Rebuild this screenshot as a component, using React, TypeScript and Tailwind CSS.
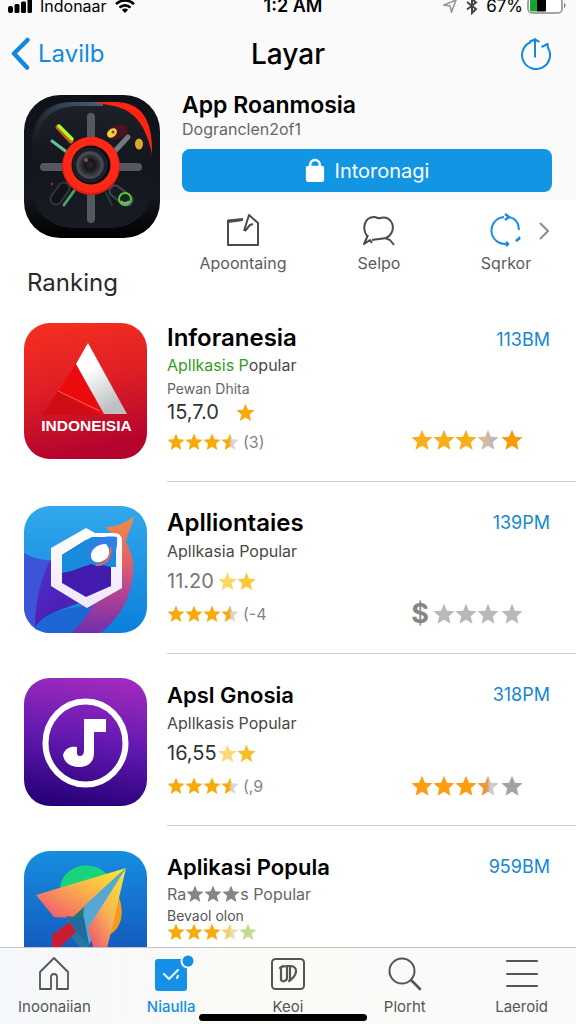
import type { ReactNode } from "react";

const STAR = "M12 0l3.300 8 8.700.6-6.600 5.700 2 8.600L12 18.300 4.600 22.900l2-8.600L0 8.600 8.700 8z";

function Star({ left, right, size }: { left: string; right?: string; size: "sm" | "md" | "lg" }) {
  const cls = size === "sm" ? "h-[18px] w-[18px]" : size === "md" ? "h-[19px] w-[19px]" : "h-[22px] w-[22px]";
  const id = `s${left}${right ?? ""}`.replace(/#/g, "");
  return (
    <svg viewBox="-0.500 -0.500 25 24.500" className={`${cls} shrink-0`} aria-hidden="true">
      {right && (
        <linearGradient id={id}>
          <stop offset="0.45" stopColor={left} />
          <stop offset="0.6" stopColor={right} />
        </linearGradient>
      )}
      <path d={STAR} fill={right ? `url(#${id})` : left} />
    </svg>
  );
}

function StatusBar() {
  return (
    <div className="relative flex h-4 items-start justify-between pl-2 pr-[10px] text-black">
      <div className="flex h-3 items-center gap-2">
        <svg viewBox="0 0 24 14" className="h-[14px] w-6" aria-hidden="true">
          <rect x="0" y="7" width="5" height="7" rx="2" />
          <rect x="6.5" y="5" width="5" height="9" rx="1.5" />
          <rect x="13" y="2.5" width="5" height="11.5" rx="1.5" />
          <rect x="19.5" y="0" width="4.5" height="14" rx="1.5" />
        </svg>
        <span className="text-[16px] leading-3">Indonaar</span>
        <svg viewBox="0 0 20 14" className="h-[14px] w-5" fill="none" stroke="black" strokeWidth="2.6" aria-hidden="true">
          <path d="M1 5.2C6 .2 14 .2 19 5.2M4.5 8.6c3-3 8-3 11 0" />
          <path d="M10 14l-3.2-3.2c1.8-1.7 4.6-1.7 6.4 0z" fill="black" stroke="none" />
        </svg>
      </div>
      <span className="absolute inset-x-0 top-0 pl-2.5 text-center text-[18px] font-semibold leading-3">1:2 AM</span>
      <div className="flex h-3 items-center">
        <svg viewBox="0 0 14 14" className="mr-[9px] h-[14px] w-[14px]" fill="none" stroke="#999" strokeWidth="1.6" aria-hidden="true">
          <path d="M1 6L13 1 8.500 13 7 7z" />
        </svg>
        <svg viewBox="0 0 12 18" className="mr-2 h-[18px] w-3" fill="none" stroke="#444" strokeWidth="2" aria-hidden="true">
          <path d="M1 5l9 7-4 4V2l4 3.500-9 7" />
        </svg>
        <span className="mr-1 text-[17px] leading-3">67%</span>
        <svg viewBox="0 0 39 18" className="h-[18px] w-[39px]" aria-hidden="true">
          <rect x="1" y="1" width="34" height="15" rx="4" fill="white" stroke="#888" strokeWidth="1.500" />
          <rect x="3" y="2.500" width="8" height="12" rx="1" fill="#16a52c" />
          <rect x="10" y="2.500" width="9" height="12" rx="1" fill="black" />
          <path d="M37 6c2 1 2 4 0 5z" fill="#777" />
        </svg>
      </div>
    </div>
  );
}

function Header() {
  return (
    <header className="relative flex h-[76px] items-center justify-between pl-[11px] pr-[25px]">
      <a href="#back" className="flex items-center gap-2 text-[#1489dc]">
        <svg viewBox="0 0 19 34" className="h-[34px] w-[19px]" fill="none" stroke="currentColor" strokeWidth="4.500" strokeLinecap="round" strokeLinejoin="round" aria-hidden="true">
          <path d="M16.500 3L3 16.500l13 14" />
        </svg>
        <span className="text-[24px] leading-8">Lavilb</span>
      </a>
      <h1 className="pointer-events-none absolute inset-x-0 text-center text-[28px] font-medium leading-9 text-black">Layar</h1>
      <button type="button" aria-label="Bagikan" className="text-[#1489dc]">
        <svg viewBox="0 0 32 34" className="h-[34px] w-8" fill="none" stroke="currentColor" strokeWidth="2" aria-hidden="true">
          <path d="M12 5A14 14 0 1 0 28.500 10M22.500 10l6-3 .5 4" />
          <path d="M16 20.500V2.500M10.500 4.500L16 2.500l4.500 2.500" />
          <path d="M11 4.500L16 1l4.500 3.500z" fill="currentColor" stroke="none" />
        </svg>
      </button>
    </header>
  );
}

function CameraIcon() {
  return (
    <svg viewBox="0 0 136 143" className="h-[143px] w-[136px] shrink-0" aria-hidden="true">
      <defs>
        <linearGradient id="camBg" x2="0" y2="1">
          <stop stopColor="#0e1116" />
          <stop offset="0.7" stopColor="#15181f" />
          <stop offset="1" stopColor="#000" />
        </linearGradient>
        <linearGradient id="camFace" x2="0" y2="1">
          <stop stopColor="#1d2128" />
          <stop offset="0.5" stopColor="#13161c" />
          <stop offset="1" stopColor="#181b23" />
        </linearGradient>
        <linearGradient id="camEdge" x1="1" x2="0" y2="1">
          <stop stopColor="#52647e" />
          <stop offset="1" stopColor="#20262f" stopOpacity="0" />
        </linearGradient>
        <radialGradient id="lens">
          <stop stopColor="#38252b" />
          <stop offset="0.3" stopColor="#17151b" />
          <stop offset="0.55" stopColor="#33353d" />
          <stop offset="0.72" stopColor="#4b4e58" />
          <stop offset="0.85" stopColor="#181a20" />
          <stop offset="1" stopColor="#24262d" />
        </radialGradient>
      </defs>
      <rect width="136" height="143" rx="36" fill="url(#camBg)" />
      <rect x="8" y="7" width="120" height="126" rx="40" fill="url(#camFace)" />
      <path d="M8 55V47C9 22 23 7 48 7h31v4H52C28 12 18 24 14 40z" fill="url(#camEdge)" />
      <path d="M70 7h21c26 0 38 17 37 52-6-29-18-46-44-49z" fill="#ff2412" />
      <g stroke="#55585e" strokeWidth="8" strokeLinecap="round">
        <path d="M67 22v30M67 92v32M20 72h30M90 72h24" />
      </g>
      <g strokeLinecap="round" fill="none">
        <path d="M34 32l13 14" stroke="#cf591f" strokeWidth="5" />
        <path d="M35 31l13 13" stroke="#a6ff21" strokeWidth="3.500" />
        <path d="M28 46l16 12" stroke="#65bfa6" strokeWidth="3" />
        <path d="M104 42L91 56" stroke="#747981" strokeWidth="5" />
        <path d="M40 93l-8 11" stroke="#30363d" strokeWidth="13" />
        <path d="M40 93l-8 11" stroke="#101319" strokeWidth="9" />
        <path d="M50 96l-10 14" stroke="#4b9e67" strokeWidth="3" />
        <path d="M91 96l12 9" stroke="#40484d" strokeWidth="13" />
        <path d="M91 96l11 9" stroke="#171c20" strokeWidth="9" />
        <path d="M82 98l6 12" stroke="#244039" strokeWidth="2" />
      </g>
      <ellipse cx="93" cy="37" rx="11" ry="7" transform="rotate(-20 93 37)" fill="#481421" />
      <ellipse cx="88" cy="38" rx="5.500" ry="4" transform="rotate(-40 88 38)" fill="#f1d43d" />
      <circle cx="89" cy="37" r="1.500" fill="#8a431a" />
      <ellipse cx="115" cy="49" rx="4" ry="5.500" fill="#d9a92b" />
      <circle cx="101" cy="104" r="6" fill="#15281d" stroke="#58c63b" strokeWidth="2" />
      <path d="M97 106a5 5 0 0 0 8 0" stroke="#94adb0" strokeWidth="2" fill="none" />
      <circle cx="28" cy="89" r="1.500" fill="#7b3420" />
      <circle cx="67" cy="71" r="29" fill="#d71c11" />
      <circle cx="67" cy="70" r="28" fill="#fd2816" />
      <circle cx="67" cy="70" r="19.500" fill="#090a0e" />
      <circle cx="66" cy="70" r="17.500" fill="url(#lens)" />
      <circle cx="62" cy="65" r="2" fill="#6b5960" />
    </svg>
  );
}

function RedIcon() {
  return (
    <svg viewBox="0 0 123 136" className="h-[136px] w-[123px]" role="img" aria-label="INDONEISIA">
      <defs>
        <linearGradient id="redBg" x2="0.200" y2="1">
          <stop stopColor="#f6301f" />
          <stop offset="0.5" stopColor="#df1f25" />
          <stop offset="1" stopColor="#b5042d" />
        </linearGradient>
        <linearGradient id="silver" x2="0.500" y2="1">
          <stop offset="0.400" stopColor="#fff" />
          <stop offset="1" stopColor="#bfc0c3" />
        </linearGradient>
      </defs>
      <rect width="123" height="136" rx="26" fill="url(#redBg)" />
      <path d="M52 41L18 92h62z" fill="#ed0a0d" />
      <path d="M34 68l-16 24h58z" fill="#cf0d14" />
      <path d="M34 68l42 20" stroke="#fb6a53" strokeWidth="1" />
      <path d="M64 20L52 41l28 50h23z" fill="url(#silver)" />
      <text x="62.500" y="108" textAnchor="middle" fill="#fff" fontSize="15.500" fontWeight="700" fontFamily="Liberation Sans, sans-serif">INDONEISIA</text>
    </svg>
  );
}

function HexIcon() {
  return (
    <svg viewBox="0 0 123 127" className="h-[127px] w-[123px]" aria-hidden="true">
      <defs>
        <linearGradient id="hexBg" x2="0" y2="1">
          <stop stopColor="#32a8ed" />
          <stop offset="1" stopColor="#0b80dc" />
        </linearGradient>
        <linearGradient id="hexPurple" x2="1" y2="1">
          <stop stopColor="#5039d4" />
          <stop offset="0.5" stopColor="#4b20b8" />
          <stop offset="1" stopColor="#7730ad" />
        </linearGradient>
        <linearGradient id="hexFlame" x2="0" y2="1">
          <stop stopColor="#f38b43" />
          <stop offset="0.400" stopColor="#e0606a" />
          <stop offset="0.650" stopColor="#b54390" />
          <stop offset="1" stopColor="#7030ae" />
        </linearGradient>
        <linearGradient id="hexWhite" x2="0" y2="1">
          <stop stopColor="#fff" />
          <stop offset="1" stopColor="#eee6fa" />
        </linearGradient>
        <clipPath id="hexClip"><rect width="123" height="127" rx="26" /></clipPath>
      </defs>
      <g clipPath="url(#hexClip)">
        <rect width="123" height="127" fill="url(#hexBg)" />
        <path d="M0 47c10 6 20 8 32 7v60c-10 3-16 6-21 13H0z" fill="#3c55d8" />
        <path d="M25 56c-9 20-14 40-14 65 18-20 40-20 60-30l24-50H40z" fill="url(#hexPurple)" />
        <path d="M81 21c13 0 22-5 29-11-2 11-7 18-8 27 8 12 9 26 5 44-5 20-16 34-30 46H42c-10-2-14-6-18-12 16-10 34-14 50-22l18-62z" fill="url(#hexFlame)" />
        <path d="M11 121c14-19 34-18 58-22-6 12-13 20-22 28H11z" fill="#1c67d4" />
        <path d="M62 22l9 5h19q8 0 8 8v47L63 102 27 80V42z" fill="url(#hexWhite)" />
        <path d="M62 34h25v46L62 91 38 77V49z" fill="#431caf" />
        <path d="M62 34l6-3h24v30H86l-14-4c-12 2-20 8-34 10V49z" fill="#198bdc" />
        <path d="M93 31c-14-2-29 2-30 15-1 12 8 16 17 13 10-4 14-14 13-28z" fill="#2f7fe4" />
        <path d="M82 38c-9 0-16 6-15 13 2 8 12 6 17 0 2-4 2-8-2-13z" fill="#fff" />
        <path d="M87 41c-1 10-4 17-15 18 10 0 15-5 15-18z" fill="#ef6547" stroke="#ef6547" strokeWidth="1.500" />
      </g>
    </svg>
  );
}

function NoteIcon() {
  return (
    <svg viewBox="0 0 123 128" className="h-[128px] w-[123px]" aria-hidden="true">
      <defs>
        <linearGradient id="noteBg" x1="0.550" x2="0.400" y2="1">
          <stop stopColor="#9f2abe" />
          <stop offset="0.5" stopColor="#6018af" />
          <stop offset="1" stopColor="#270078" />
        </linearGradient>
      </defs>
      <rect width="123" height="128" rx="26" fill="url(#noteBg)" />
      <ellipse cx="61.500" cy="65" rx="40" ry="41.500" fill="none" stroke="#fff" strokeWidth="6" />
      <path d="M60 41h22v13H70v21c0 9-6 14-15 14-8 0-15-4-16-12 2-7 8-9 14-8 0 5-1 9 3 9 4 0 4-4 4-9z" fill="#fff" />
    </svg>
  );
}

function PlaneIcon() {
  return (
    <svg viewBox="0 0 123 128" className="h-[128px] w-[123px]" aria-hidden="true">
      <defs>
        <linearGradient id="planeBg" x2="0" y2="1">
          <stop stopColor="#168ee0" />
          <stop offset="0.800" stopColor="#1558bd" />
        </linearGradient>
        <linearGradient id="wing" x1="1" x2="0.100" y2="0.900">
          <stop stopColor="#f9ef31" />
          <stop offset="0.500" stopColor="#fab24a" />
          <stop offset="1" stopColor="#f45f6c" />
        </linearGradient>
        <linearGradient id="wing2" x1="1" x2="0.300" y2="1">
          <stop stopColor="#f6ec31" />
          <stop offset="0.550" stopColor="#f8b654" />
          <stop offset="1" stopColor="#ef596e" />
        </linearGradient>
      </defs>
      <rect width="123" height="128" rx="26" fill="url(#planeBg)" />
      <path d="M36 37c2-18 20-26 36-21 8 3 15 10 17 18L67 62 36 58z" fill="#19d47c" />
      <path d="M93 42c9 18 5 38-11 43L76 70z" fill="#f59b1e" />
      <path d="M43 66l21 8 1 34-20-25z" fill="#2479a3" />
      <path d="M50 68L28 84v20l28-27z" fill="#c91c32" />
      <path d="M102 17L12 44l18 22 19 1z" fill="url(#wing)" />
      <path d="M102 17L49 66l15 3z" fill="#23786f" />
      <path d="M102 17L61 54c-3 8-1 13 0 20l4 20z" fill="#55a8d4" />
      <path d="M102 17L64 77l8 30 9-1z" fill="url(#wing2)" />
      <path d="M42 65l18 2 5 27-15-16z" fill="#236b9e" />
    </svg>
  );
}

function Action({ label, children }: { label: string; children: ReactNode }) {
  return (
    <button type="button" className="flex flex-col items-center text-[#5c5c5c]">
      <svg viewBox="0 0 34 34" className="h-[34px] w-[34px]" fill="none" stroke="#4b4b4b" strokeWidth="2" strokeLinejoin="round" aria-hidden="true">
        {children}
      </svg>
      <span className="mt-1 text-[16px] leading-6">{label}</span>
    </button>
  );
}

function Hero() {
  return (
    <section className="flex h-[180px] bg-[linear-gradient(#fafafa_108px,#ffffff_108px)] pl-6">
      <div className="mt-[3px]"><CameraIcon /></div>
      <div className="ml-[22px] min-w-0 flex-1">
        <h2 className="text-[23px] font-semibold leading-[26px] text-black">App Roanmosia</h2>
        <p className="text-[16px] leading-[22px] text-[#666]">Dogranclen2of1</p>
        <button type="button" className="mt-[9px] flex h-[43px] w-[calc(100%-24px)] items-center justify-center gap-[10px] rounded-lg bg-[#1296e4] text-white">
          <svg viewBox="0 0 20 26" className="h-[25px] w-5" aria-hidden="true">
            <path d="M5 10V7a5 5 0 0 1 10 0v3" fill="none" stroke="white" strokeWidth="2.500" />
            <rect x="0.500" y="8" width="19" height="17" rx="2.500" fill="white" />
          </svg>
          <span className="text-[20px] leading-7">Intoronagi</span>
        </button>
        <div className="relative -ml-[7px] mt-[21px] grid grid-cols-[1fr_1fr_118px] pr-[11px]">
          <Action label="Apoontaing">
            <path d="M17 6L2 7.500V32h30V10L23 2l-5 16M2 9l15-2M19 18l5-6 3-1" />
          </Action>
          <Action label="Selpo">
            <path d="M5 23C0 16 2 4 12 4c3 0 4 2 6 1 13-4 18 14 6 20-4 1-8 1-14 2M6 22L2 31l6-4 2 3M23 25l5 2 4 5" />
          </Action>
          <Action label="Sqrkor">
            <g stroke="#198ee0">
              <path d="M15 4A13.500 13.500 0 0 0 17 31M18 4c6 0 9 3 11 7l1 6M31 24l-4 4M15 31l5 0" />
              <path d="M16 1l4 3-4 3M27 28l4-3M17 29l2 2-2 2" strokeWidth="2.500" />
            </g>
          </Action>
          <svg viewBox="0 0 10 18" className="absolute right-[27px] top-[9px] h-[18px] w-[10px]" fill="none" stroke="#8d8d8d" strokeWidth="2" aria-hidden="true">
            <path d="M1 1l8 8-8 8" />
          </svg>
        </div>
      </div>
    </section>
  );
}

const O = "#f9ad19";
const G = "#b9b9b9";

function SmallStars({ count }: { count?: string }) {
  return (
    <div className="flex h-[34px] items-center">
      <Star size="sm" left="#f7ab0b" />
      <Star size="sm" left="#f7ab0b" />
      <Star size="sm" left="#f7ab0b" />
      <Star size="sm" left="#f7ab0b" right="#d8d5d3" />
      <span className="ml-1 text-[16px] leading-5 text-[#858585]">{count}</span>
    </div>
  );
}

function Row({ icon, first, last, time, rating, children }: {
  icon: ReactNode; first?: boolean; last?: boolean; time: string; rating?: ReactNode; children: ReactNode;
}) {
  return (
    <li className={`flex shrink-0 pl-6 ${first ? "h-[159px]" : "h-[172px]"}`}>
      <div className={first ? "" : last ? "pt-[25px]" : "pt-6"}>{icon}</div>
      <div className={`ml-5 flex min-w-0 flex-1 justify-between border-b border-[#cfcfcf] ${first ? "pt-px" : "pt-[27px]"}`}>
        <div>{children}</div>
        <div className={`flex flex-col items-end ${first ? "pt-0.5" : ""}`}>
          <span className="pr-[26px] text-[18px] leading-7 text-[#1587d3]">{time}</span>
          <div className={`flex items-center pr-[53px] ${first ? "mt-[75px]" : "mt-[66px]"}`}>{rating}</div>
        </div>
      </div>
    </li>
  );
}

const title = "text-[24px] font-semibold leading-7 text-black";
const narrowTitle = "text-[22px] font-semibold leading-7 text-black";
const sub = "text-[16px] leading-7 text-[#484848]";

function Ranking() {
  return (
    <section className="min-h-0 flex-1 overflow-hidden">
      <h2 className="pl-[27px] text-[24px] leading-[22px] text-[#292929]">Ranking</h2>
      <ul className="mt-[29px] flex flex-col">
        <Row first icon={<RedIcon />} time="113BM" rating={<><Star size="lg" left={O} /><Star size="lg" left={O} /><Star size="lg" left={O} /><Star size="lg" left="#d9b8a0" right="#bcb9bd" /><span className="ml-0.5"><Star size="lg" left="#fa980a" /></span></>}>
          <h3 className={title}>Inforanesia</h3>
          <p className="text-[16px] leading-[26px] text-[#484848]"><span className="text-[#359a1e]">Apllkasis P</span>opular</p>
          <p className="text-[14px] leading-[22px] text-[#666]">Pewan Dhita</p>
          <p className="flex h-6 items-center text-[20px] leading-6 text-[#333]"><span className="w-[69px]">15,7.0</span><Star size="md" left="#f7ab0b" /></p>
          <div className="pt-px"><SmallStars count="(3)" /></div>
        </Row>
        <Row icon={<HexIcon />} time="139PM" rating={<><span className="mr-1 text-[27px] font-bold leading-[22px] text-[#858585]">$</span><Star size="lg" left={G} /><Star size="lg" left={G} /><Star size="lg" left={G} /><span className="ml-0.5"><Star size="lg" left={G} /></span></>}>
          <h3 className={title}>Aplliontaies</h3>
          <p className={sub}>Apllkasia Popular</p>
          <p className="flex h-8 items-center text-[20px] text-[#777]"><span className="w-[51px]">11.20</span><Star size="md" left="#fbd660" /><Star size="md" left="#fbc736" /></p>
          <SmallStars count="(-4" />
        </Row>
        <Row icon={<NoteIcon />} time="318PM" rating={<><Star size="lg" left="#fd9d12" /><Star size="lg" left="#fd9d12" /><Star size="lg" left="#fd9d12" /><Star size="lg" left="#ed963b" right="#cccbd0" /><span className="ml-0.5"><Star size="lg" left="#a5a19f" /></span></>}>
          <h3 className={narrowTitle}>Apsl Gnosia</h3>
          <p className={sub}>Apllkasis Popular</p>
          <p className="flex h-8 items-center text-[20px] text-[#333]"><span className="w-[51px]">16,55</span><Star size="md" left="#fbda77" /><Star size="md" left="#f9bd22" /></p>
          <SmallStars count="(,9" />
        </Row>
        <Row last icon={<PlaneIcon />} time="959BM">
          <h3 className={narrowTitle}>Aplikasi Popula</h3>
          <p className="flex items-center text-[16px] leading-[26px] text-[#666]">Ra<Star size="sm" left="#858585" /><Star size="sm" left="#858585" /><Star size="sm" left="#858585" />s Popular</p>
          <p className="text-[14px] leading-[18px] text-[#555]">Bevaol olon</p>
          <div className="flex h-[14px] items-center">
            <Star size="sm" left="#f7ab0b" /><Star size="sm" left="#f7ab0b" /><Star size="sm" left="#f7ab0b" /><Star size="sm" left="#f5cf6c" right="#eadfbd" /><Star size="sm" left="#c5db91" />
          </div>
        </Row>
      </ul>
    </section>
  );
}

function Tab({ label, active, children }: { label: string; active?: boolean; children: ReactNode }) {
  return (
    <a href={`#${label}`} className={`flex flex-1 flex-col items-center ${active ? "font-medium text-[#148fe3]" : "text-[#555]"}`}>
      <svg viewBox="0 0 36 36" className="h-9 w-9 overflow-visible" fill="none" stroke="#555" strokeWidth="1.800" strokeLinejoin="round" strokeLinecap="round" aria-hidden="true">
        {children}
      </svg>
      <span className="mt-[5px] text-[15px] leading-5">{label}</span>
    </a>
  );
}

export default function App() {
  return (
    <div className="relative flex h-screen flex-col overflow-hidden bg-white font-['Inter','Liberation_Sans',sans-serif]">
      <div className="shrink-0 bg-[#fafafa]">
        <StatusBar />
        <Header />
      </div>
      <div className="shrink-0"><Hero /></div>
      <Ranking />
      <nav className="-mx-1 flex h-[77px] shrink-0 border-t border-[#c4c4c4] bg-[linear-gradient(90deg,#f5f8fb,#fafaf6_40%,#fafafa)] pt-2">
        <Tab label="Inoonaiian">
          <path d="M4 16L18 2l14 14v17H21V21q0-3-3-3t-3 3v12H4z" />
        </Tab>
        <Tab label="Niaulla" active>
          <rect x="2" y="3" width="32" height="32" rx="3" fill="#168fe7" stroke="none" />
          <path d="M11 18l5 5 9-9M25 20l-1 2" stroke="#dff8ff" strokeWidth="2.200" />
          <circle cx="35" cy="5" r="6.500" fill="#168fe7" stroke="#f8fafb" strokeWidth="2" />
        </Tab>
        <Tab label="Keoi">
          <rect x="2" y="3" width="32" height="30" rx="3.500" strokeWidth="2" />
          <path d="M11 11v13q3 3 6-1V10zM17 10h4c7 1 7 9-2 15M20 11v12M10 12l3-2" strokeWidth="2.200" />
        </Tab>
        <Tab label="Plorht">
          <circle cx="15" cy="15" r="12.500" strokeWidth="2" />
          <path d="M24 24l9 9" strokeWidth="2.600" />
        </Tab>
        <Tab label="Laeroid">
          <path d="M3 5h30M3 18h30M3 30h30" strokeWidth="2" />
        </Tab>
      </nav>
      <div className="absolute bottom-[3px] left-1/2 h-[7px] w-[168px] -translate-x-[89px] rounded-full bg-black" />
    </div>
  );
}
